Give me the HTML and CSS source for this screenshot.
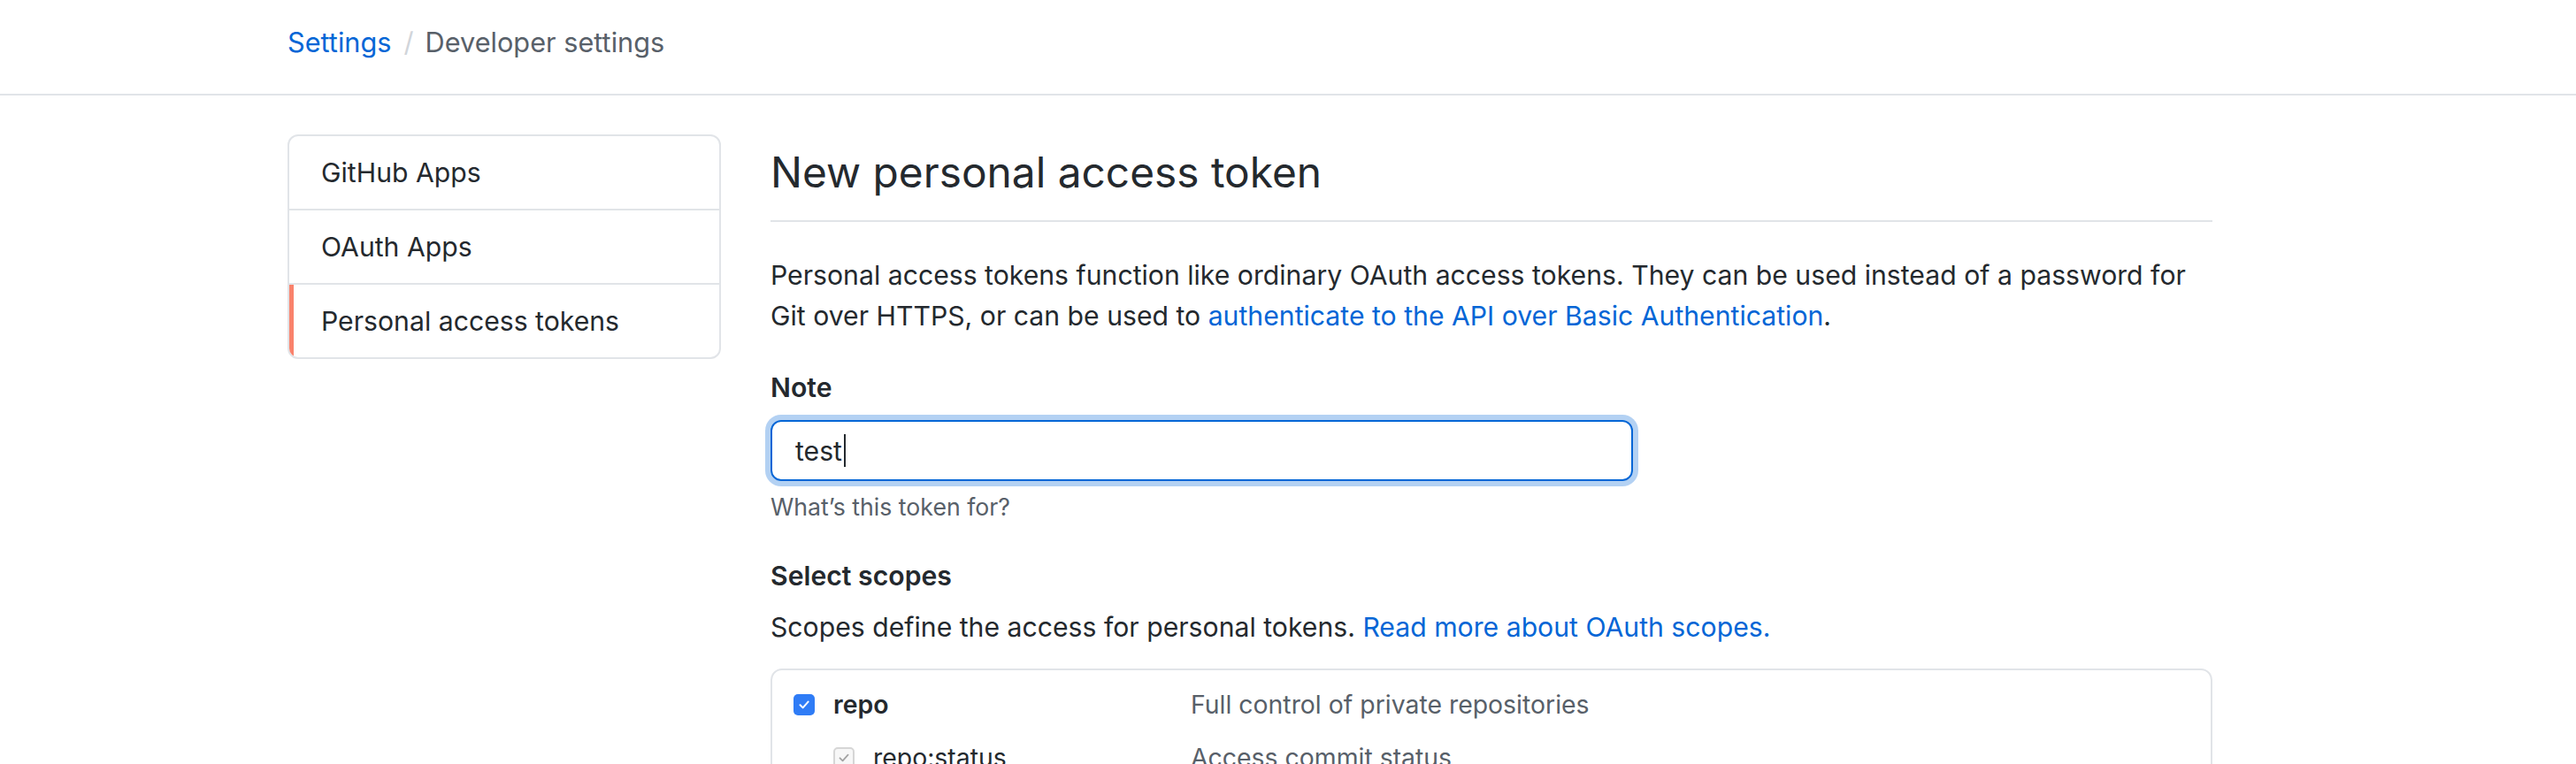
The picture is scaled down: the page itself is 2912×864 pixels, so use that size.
FILE: index.html
```html
<!DOCTYPE html>
<html lang="en">
<head>
<meta charset="utf-8">
<title>New personal access token</title>
<link rel="stylesheet" href="styles.css">
</head>
<body>
<header class="pagehead">
  <nav class="breadcrumb">
    <a class="crumb-link" href="#">Settings</a>
    <span class="crumb-sep">/</span>
    <span class="crumb-current">Developer settings</span>
  </nav>
</header>
<div class="layout">
  <aside class="sidebar">
    <nav class="menu">
      <a class="menu-item" href="#">GitHub Apps</a>
      <a class="menu-item" href="#">OAuth Apps</a>
      <a class="menu-item selected" href="#">Personal access tokens</a>
    </nav>
  </aside>
  <main class="content">
    <h2 class="subhead">New personal access token</h2>
    <p class="intro">Personal access tokens function like ordinary OAuth access tokens. They can be used instead of a password for Git over HTTPS, or can be used to <a class="link" href="#">authenticate to the API over Basic Authentication</a>.</p>
    <div class="field-label">Note</div>
    <div class="form-control"><span class="input-text">test</span><span class="caret"></span></div>
    <p class="note">What’s this token for?</p>
    <h3 class="field-label scopes-title">Select scopes</h3>
    <p class="scopes-intro">Scopes define the access for personal tokens. <a class="link" href="#">Read more about OAuth scopes.</a></p>
    <div class="scope-box">
      <div class="scope-row">
        <div class="scope-name top">
          <span class="check checked"><svg viewBox="0 0 16 16" width="16" height="16"><path d="M3.5 8.3 L6.6 11.4 L12.6 4.6" fill="none" stroke="#fff" stroke-width="2" stroke-linecap="round" stroke-linejoin="round"/></svg></span>
          <span class="name-text">repo</span>
        </div>
        <div class="scope-desc">Full control of private repositories</div>
      </div>
      <div class="scope-row sub">
        <div class="scope-name">
          <span class="check disabled"><svg viewBox="0 0 16 16" width="16" height="16"><path d="M3.5 8.3 L6.6 11.4 L12.6 4.6" fill="none" stroke="#a3a3a3" stroke-width="1.8" stroke-linecap="round" stroke-linejoin="round"/></svg></span>
          <span class="name-text">repo:status</span>
        </div>
        <div class="scope-desc">Access commit status</div>
      </div>
      <div class="scope-row sub">
        <div class="scope-name">
          <span class="check disabled"><svg viewBox="0 0 16 16" width="16" height="16"><path d="M3.5 8.3 L6.6 11.4 L12.6 4.6" fill="none" stroke="#a3a3a3" stroke-width="1.8" stroke-linecap="round" stroke-linejoin="round"/></svg></span>
          <span class="name-text">repo_deployment</span>
        </div>
        <div class="scope-desc">Access deployment status</div>
      </div>
    </div>
  </main>
</div>
</body>
</html>
```
FILE: styles.css
```css
* { box-sizing: border-box; }
html, body { margin: 0; padding: 0; background: #fff; }
body {
  font-family: Inter, "Liberation Sans", sans-serif;
  font-size: 30.2px;
  line-height: 46px;
  color: #24292e;
}
a { text-decoration: none; }

.pagehead {
  height: 108px;
  border-bottom: 2px solid #e1e4e8;
  display: flex;
  align-items: center;
  padding: 0 0 10px 325px;
}
.breadcrumb { display: flex; align-items: center; font-size: 30.7px; }
.crumb-link { color: #0366d6; }
.crumb-sep { color: #d1d5da; margin: 0 13px 0 14px; }
.crumb-current { color: #586069; }

.layout {
  display: flex;
  gap: 56px;
  width: 2176px;
  margin-left: 325px;
  padding-top: 44px;
}
.sidebar { width: 490px; flex: none; }
.menu {
  border: 2px solid #e1e4e8;
  border-radius: 12px;
  overflow: hidden;
}
.menu-item {
  display: block;
  position: relative;
  padding: 18px 36px;
  line-height: 46px;
  color: #24292e;
  border-top: 2px solid #e1e4e8;
}
.menu-item:first-child { border-top: none; }
.menu-item.selected::before {
  content: "";
  position: absolute;
  left: 0;
  top: 0;
  bottom: 0;
  width: 5px;
  background: #f9826c;
}

.content { flex: 1; min-width: 0; }
.subhead {
  margin: 0;
  padding: 13px 0 24px;
  font-size: 47.8px;
  line-height: 60px;
  font-weight: 400;
  border-bottom: 2px solid #e1e4e8;
}
.intro { margin: 37px 0 0; }
.link { color: #0366d6; }
.field-label { margin: 35px 0 0; font-weight: 600; font-size: 30.2px; line-height: 46px; }
.form-control {
  margin-top: 14px;
  width: 975px;
  height: 69px;
  border: 2px solid #0366d6;
  border-radius: 12px;
  box-shadow: 0 0 0 6px rgba(3, 102, 214, 0.3);
  padding: 0 26px;
  display: flex;
  align-items: center;
}
.caret { display: inline-block; width: 2px; height: 37px; background: #24292e; margin-left: 2px; }
.note { margin: 9px 0 0; font-size: 26.7px; line-height: 40px; color: #586069; }
.scopes-title { margin-top: 35px; }
.scopes-intro { margin: 12px 0 0; }

.scope-box {
  margin-top: 24px;
  border: 2px solid #e1e4e8;
  border-radius: 13px;
  padding: 16px 24px 20px;
  font-size: 28.4px;
}
.scope-row { display: flex; align-items: center; }
.scope-row.sub { margin-top: 14px; }
.scope-name { width: 449px; flex: none; display: flex; align-items: center; gap: 21px; }
.scope-row.sub .scope-name { padding-left: 45px; }
.scope-name.top .name-text { font-weight: 600; }
.scope-desc { color: #586069; }
.check {
  width: 24px;
  height: 24px;
  border-radius: 5px;
  display: flex;
  align-items: center;
  justify-content: center;
  flex: none;
}
.check.checked { background: #2f7cf6; }
.check.disabled { background: #f7f7f7; border: 2px solid #d6d6d6; }
```
